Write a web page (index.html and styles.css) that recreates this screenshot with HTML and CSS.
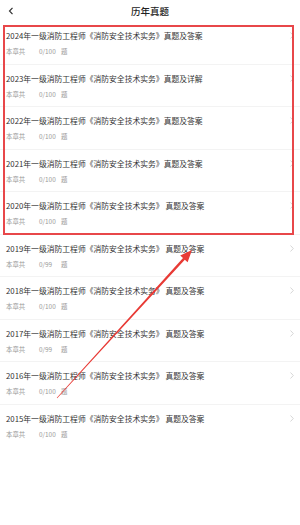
FILE: index.html
```html
<!DOCTYPE html>
<html lang="zh-CN">
<head>
<meta charset="utf-8">
<title>历年真题</title>
<link rel="stylesheet" href="styles.css">
</head>
<body>
<div class="page">
  <header class="topbar">
    <svg class="back" width="6" height="8" viewBox="0 0 6 8"><path d="M4.5 0.8 L1.5 4 L4.5 7.2" fill="none" stroke="#333" stroke-width="1.2"/></svg>
    <h1 class="title">历年真题</h1>
  </header>

  <div class="list">
    <div class="group highlight">
      <div class="item">
        <div class="body"><div class="name">2024年一级消防工程师《消防安全技术实务》真题及答案</div><div class="meta"><span>本章共</span><span>0/100</span><span>题</span></div></div>
        <svg class="chev" width="4" height="7" viewBox="0 0 4 7"><path d="M0.5 0.5 L3.3 3.5 L0.5 6.5" fill="none" stroke="#ccc" stroke-width="0.8"/></svg>
      </div>
      <div class="item">
        <div class="body"><div class="name">2023年一级消防工程师《消防安全技术实务》真题及详解</div><div class="meta"><span>本章共</span><span>0/100</span><span>题</span></div></div>
        <svg class="chev" width="4" height="7" viewBox="0 0 4 7"><path d="M0.5 0.5 L3.3 3.5 L0.5 6.5" fill="none" stroke="#ccc" stroke-width="0.8"/></svg>
      </div>
      <div class="item">
        <div class="body"><div class="name">2022年一级消防工程师《消防安全技术实务》真题及答案</div><div class="meta"><span>本章共</span><span>0/100</span><span>题</span></div></div>
        <svg class="chev" width="4" height="7" viewBox="0 0 4 7"><path d="M0.5 0.5 L3.3 3.5 L0.5 6.5" fill="none" stroke="#ccc" stroke-width="0.8"/></svg>
      </div>
      <div class="item">
        <div class="body"><div class="name">2021年一级消防工程师《消防安全技术实务》真题及答案</div><div class="meta"><span>本章共</span><span>0/100</span><span>题</span></div></div>
        <svg class="chev" width="4" height="7" viewBox="0 0 4 7"><path d="M0.5 0.5 L3.3 3.5 L0.5 6.5" fill="none" stroke="#ccc" stroke-width="0.8"/></svg>
      </div>
      <div class="item">
        <div class="body"><div class="name">2020年一级消防工程师《消防安全技术实务》 真题及答案</div><div class="meta"><span>本章共</span><span>0/100</span><span>题</span></div></div>
        <svg class="chev" width="4" height="7" viewBox="0 0 4 7"><path d="M0.5 0.5 L3.3 3.5 L0.5 6.5" fill="none" stroke="#ccc" stroke-width="0.8"/></svg>
      </div>
    </div>
    <div class="group">
      <div class="item">
        <div class="body"><div class="name">2019年一级消防工程师《消防安全技术实务》 真题及答案</div><div class="meta"><span>本章共</span><span>0/99</span><span>题</span></div></div>
        <svg class="chev" width="4" height="7" viewBox="0 0 4 7"><path d="M0.5 0.5 L3.3 3.5 L0.5 6.5" fill="none" stroke="#ccc" stroke-width="0.8"/></svg>
      </div>
      <div class="item">
        <div class="body"><div class="name">2018年一级消防工程师《消防安全技术实务》 真题及答案</div><div class="meta"><span>本章共</span><span>0/100</span><span>题</span></div></div>
        <svg class="chev" width="4" height="7" viewBox="0 0 4 7"><path d="M0.5 0.5 L3.3 3.5 L0.5 6.5" fill="none" stroke="#ccc" stroke-width="0.8"/></svg>
      </div>
      <div class="item">
        <div class="body"><div class="name">2017年一级消防工程师《消防安全技术实务》 真题及答案</div><div class="meta"><span>本章共</span><span>0/99</span><span>题</span></div></div>
        <svg class="chev" width="4" height="7" viewBox="0 0 4 7"><path d="M0.5 0.5 L3.3 3.5 L0.5 6.5" fill="none" stroke="#ccc" stroke-width="0.8"/></svg>
      </div>
      <div class="item">
        <div class="body"><div class="name">2016年一级消防工程师《消防安全技术实务》 真题及答案</div><div class="meta"><span>本章共</span><span>0/100</span><span>题</span></div></div>
        <svg class="chev" width="4" height="7" viewBox="0 0 4 7"><path d="M0.5 0.5 L3.3 3.5 L0.5 6.5" fill="none" stroke="#ccc" stroke-width="0.8"/></svg>
      </div>
      <div class="item last">
        <div class="body"><div class="name">2015年一级消防工程师《消防安全技术实务》 真题及答案</div><div class="meta"><span>本章共</span><span>0/100</span><span>题</span></div></div>
        <svg class="chev" width="4" height="7" viewBox="0 0 4 7"><path d="M0.5 0.5 L3.3 3.5 L0.5 6.5" fill="none" stroke="#ccc" stroke-width="0.8"/></svg>
      </div>
    </div>
  </div>

  <svg class="arrow" width="300" height="525" viewBox="0 0 300 525">
    <polygon points="56.8,397.8 183,258.1 180.2,255.5 192,250 187.6,262.3 184.8,259.7 57.2,398.2" fill="#e83a35"/>
  </svg>
</div>
</body>
</html>
```

FILE: styles.css
```css
html, body {
  margin: 0;
  padding: 0;
  background: #fff;
}

.page {
  position: relative;
  width: 300px;
  height: 525px;
  overflow: hidden;
  font-family: "Noto Sans CJK SC", "Noto Sans", sans-serif;
  color: #333;
}

.topbar {
  height: 22px;
  display: flex;
  align-items: center;
  justify-content: center;
  position: relative;
}

.back {
  position: absolute;
  left: 8px;
  top: 7px;
}

.title {
  margin: 0;
  font-size: 9.5px;
  font-weight: 500;
  color: #222;
  line-height: 11px;
  margin-top: 0;
}

.group {
  position: relative;
}

.highlight::after {
  content: "";
  position: absolute;
  top: 2.5px;
  bottom: 0;
  left: 3px;
  right: 6px;
  border: 2px solid #e8474a;
  pointer-events: none;
}

.item {
  display: flex;
  align-items: flex-start;
  padding: 8px 6px 7.5px 6px;
  border-bottom: 1px solid #f3f3f3;
}

.item.last {
  border-bottom: none;
}

.body {
  flex: 1;
  min-width: 0;
}

.name {
  font-size: 7.8px;
  line-height: 11px;
  color: #333;
  white-space: nowrap;
}

.meta {
  display: grid;
  grid-template-columns: 33px 22px auto;
  margin-top: 6px;
  font-size: 6.4px;
  line-height: 9px;
  color: #999;
}

.chev {
  margin-top: 2px;
  margin-left: 4px;
  flex: none;
}

.arrow {
  position: absolute;
  left: 0;
  top: 0;
  pointer-events: none;
}
```
